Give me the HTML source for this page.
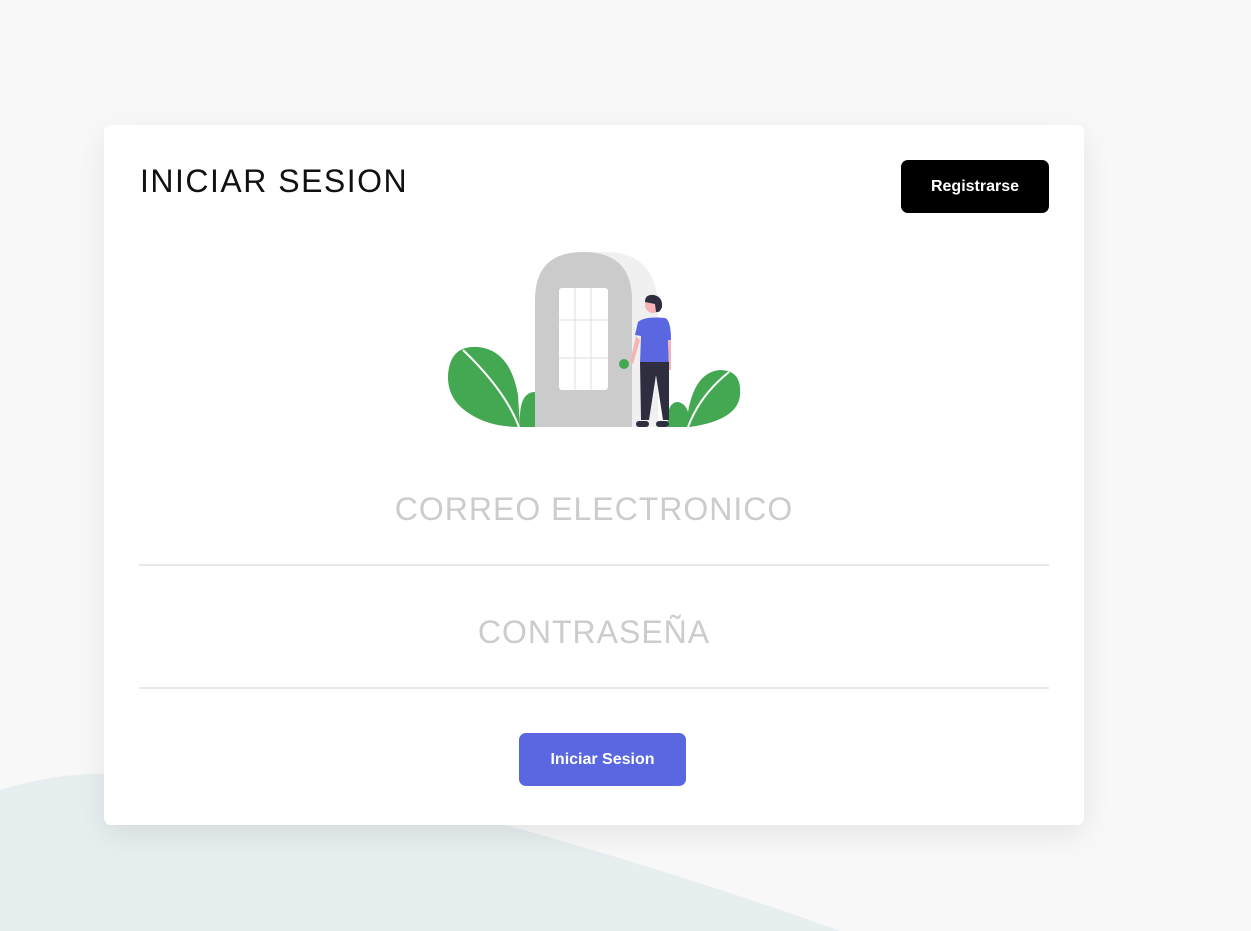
<!DOCTYPE html>
<html><head><meta charset="utf-8"><style>
html,body{margin:0;padding:0}
body{width:1251px;height:931px;background:#f8f8f8;position:relative;overflow:hidden;font-family:"Liberation Sans",sans-serif}
.wave{position:absolute;left:0;top:0}
.card{position:absolute;left:104px;top:125px;width:980px;height:700px;background:#fff;border-radius:7px;box-shadow:0 10px 30px rgba(0,0,0,0.08)}
h1{position:absolute;left:36px;top:38px;margin:0;font-weight:400;font-size:32px;letter-spacing:1.5px;color:#111}
.reg{position:absolute;left:797px;top:35px;width:148px;height:53px;background:#000;color:#fff;border-radius:7px;font-weight:700;font-size:16px;text-align:center;line-height:53px}
.field{position:absolute;left:35px;width:910px;text-align:center;color:#ccc;font-size:32px;letter-spacing:1px;border-bottom:2px solid #e6eaeb;box-sizing:border-box}
.btn{position:absolute;left:415px;top:608px;width:167px;height:53px;background:#5a67e0;color:#fff;border-radius:7px;font-weight:700;font-size:16px;text-align:center;line-height:53px}
</style></head><body>
<svg class="wave" width="1251" height="931"><path d="M0 790 Q60 772 110 774 L510 826 Q700 880 840 931 L0 931 Z" fill="#e7eef0"/></svg>
<div class="card">
<h1>INICIAR SESION</h1>
<div class="reg">Registrarse</div>
<svg style="position:absolute;left:336px;top:120px" width="310" height="190" viewBox="440 245 310 190">
<path d="M582 252 L605 252 Q658 252 658 310 L658 427 L582 427 Z" fill="#f0f0f0"/>
<path d="M535 300 Q535 252 583 252 Q632 252 632 300 L632 427 L535 427 Z" fill="#cbcbcb"/>
<rect x="559" y="288" width="49" height="102" rx="3" fill="#fff"/>
<path d="M575 288V390M591 288V390M559 320H608M559 358H608" stroke="#ddd" stroke-width="1"/>
<path d="M448 375 Q450 345 478 347 Q510 350 518 395 L520 427 Q490 427 470 414 Q447 400 448 375 Z" fill="#44a853"/>
<path d="M463 350 Q505 390 519 427" stroke="#fff" stroke-width="2" fill="none"/>
<path d="M520 427 Q518 392 535 392 L535 427 Z" fill="#44a853"/>
<path d="M688 412 Q695 372 720 370 Q742 370 740 395 Q738 420 690 427 Z" fill="#44a853"/>
<path d="M668 427 Q666 402 678 402 Q690 404 690 427 Z" fill="#44a853"/>
<path d="M729 372 Q700 395 688 427" stroke="#fff" stroke-width="2" fill="none"/>
<circle cx="624" cy="364" r="5" fill="#44a853"/>
<circle cx="653" cy="305" r="8" fill="#f6b5b5"/>
<path d="M645 302 Q645 294 654 295 Q663 297 662 307 Q660 313 656 312 L655 304 Z" fill="#2f2e41"/>
<path d="M638 322 Q645 316 665 318 Q671 320 671 340 L668 340 L669 363 L640 363 L641 336 L635 335 Z" fill="#5a67e0"/>
<path d="M636 336 L630 362 L633 364 L640 340 Z M668 340 L669 370 L671 370 L671 340Z" fill="#f6b5b5"/>
<path d="M640 362 L669 362 L669 420 L663 420 L656 375 L649 420 L641 420 Z" fill="#2f2e41"/>
<rect x="636" y="421" width="13" height="6" rx="3" fill="#2f2e41"/>
<rect x="656" y="421" width="13" height="6" rx="3" fill="#2f2e41"/>
</svg>
<div class="field" style="top:366px;height:75px">CORREO ELECTRONICO</div>
<div class="field" style="top:489px;height:75px">CONTRASEÑA</div>
<div class="btn">Iniciar Sesion</div>
</div>
</body></html>
